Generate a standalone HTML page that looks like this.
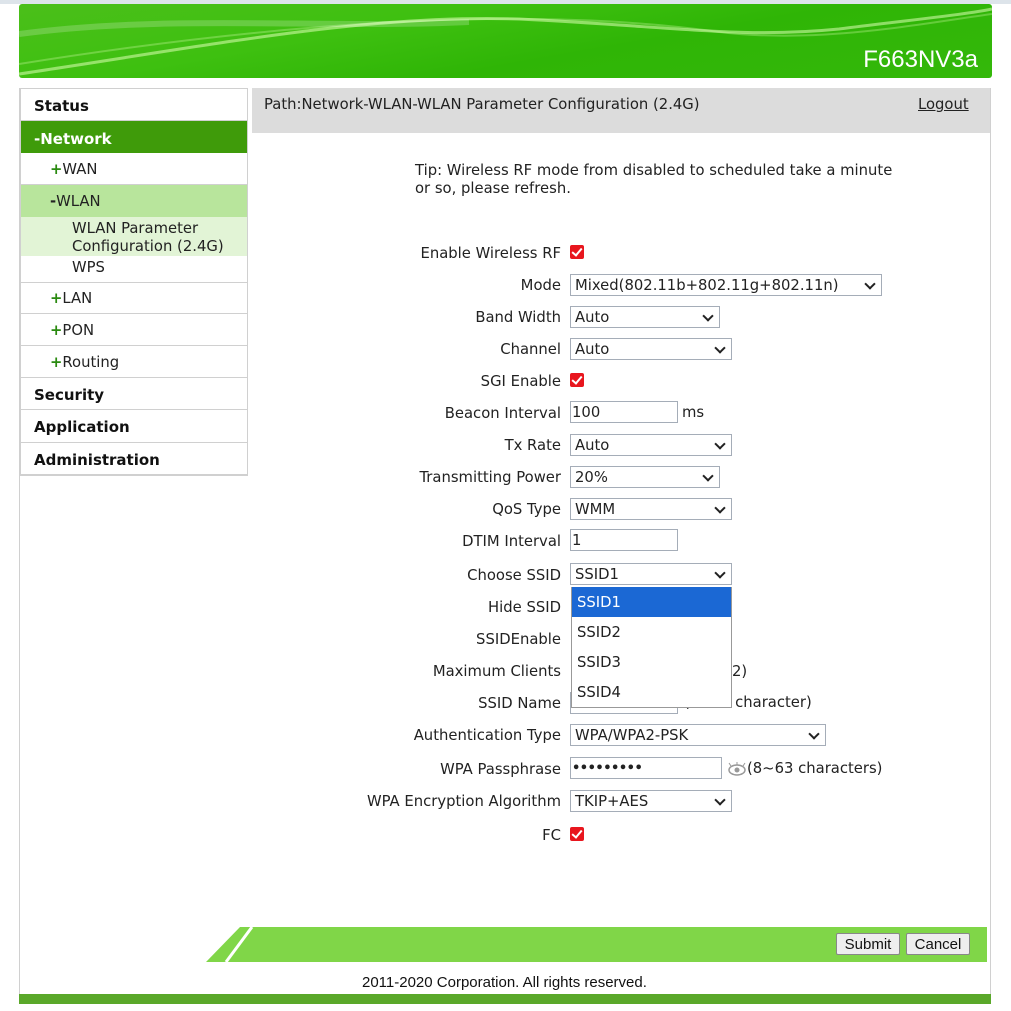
<!DOCTYPE html>
<html><head><meta charset="utf-8"><style>
body{margin:0;width:1011px;height:1011px;background:#fff;position:relative;overflow:hidden;font-family:"DejaVu Sans","Liberation Sans",sans-serif;font-size:14.8px;color:#222}
.a{position:absolute}
.lbl{position:absolute;right:450px;white-space:nowrap;line-height:18px;margin-top:1px}
.sel,.inp{position:absolute;left:570px;height:20px;border:1px solid #a5adb8;background:#fff;box-sizing:content-box;line-height:21px;padding-left:4px;white-space:nowrap}
.sel:after{content:"";position:absolute;right:7px;top:5px;width:6px;height:6px;border-right:2px solid #222;border-bottom:2px solid #222;transform:rotate(45deg)}
.inp{padding-left:1px}
.cb{position:absolute;left:570px;width:14px;height:14px;background:#e8161e;border-radius:2px}
.cb:after{content:"";position:absolute;left:4px;top:1px;width:4px;height:8px;border-right:2px solid #fff;border-bottom:2px solid #fff;transform:rotate(40deg)}
.nav{position:absolute;left:21px;width:226px;border-bottom:1px solid #d0d0d0;box-sizing:border-box}
.b{font-weight:bold;color:#111;padding-left:13px;font-size:15px}
.p{color:#2a8a10;font-weight:bold}
</style></head><body>
<div class="a" style="left:0;top:0;width:1011px;height:4px;background:#dde4ea"></div>
<div class="a" style="left:19px;top:4px;width:973px;height:74px;border-radius:3px;background:linear-gradient(170deg,#4bbf1a 0%,#3ec010 35%,#2fb506 60%,#34b80a 100%);overflow:hidden">
<svg width="973" height="74" class="a" style="left:0;top:0"><path d="M0 70 C200 40 350 10 500 15 C650 22 720 35 820 25 C900 15 950 10 973 5" stroke="rgba(220,255,180,0.55)" stroke-width="3" fill="none"/><path d="M0 60 C250 20 500 0 700 28 C800 40 900 20 973 10" stroke="rgba(220,255,180,0.3)" stroke-width="2" fill="none"/><path d="M0 30 C150 10 300 25 450 18" stroke="rgba(255,255,255,0.2)" stroke-width="6" fill="none"/></svg>
<div class="a" style="right:14px;top:42px;color:#fff;font-family:'Liberation Sans',sans-serif;font-size:24px">F663NV3a</div></div>
<div class="a" style="left:19px;top:88px;width:1px;height:916px;background:#d0d0d0"></div>
<div class="a" style="left:990px;top:88px;width:1px;height:906px;background:#d0d0d0"></div>
<div class="a" style="left:20px;top:88px;width:228px;height:388px;border:1px solid #d0d0d0;box-sizing:border-box"></div>
<div class="nav b" style="top:89px;height:32px;line-height:34px">Status</div>
<div class="nav b" style="top:121px;height:32px;line-height:36px;background:#3f9b0a;color:#fff;border:0">-Network</div>
<div class="nav" style="top:153px;height:32px;line-height:34px;padding-left:29px"><span class="p">+</span>WAN</div>
<div class="nav" style="top:185px;height:32px;line-height:34px;padding-left:29px;background:#b8e59c;border:0"><b>-</b>WLAN</div>
<div class="nav" style="top:217px;height:39px;padding-left:51px;background:#e2f4d6;border:0;line-height:18px;padding-top:3px">WLAN Parameter<br>Configuration (2.4G)</div>
<div class="nav" style="top:256px;height:27px;padding-left:51px;line-height:24px">WPS</div>
<div class="nav" style="top:283px;height:31px;line-height:32px;padding-left:29px"><span class="p">+</span>LAN</div>
<div class="nav" style="top:314px;height:32px;line-height:34px;padding-left:29px"><span class="p">+</span>PON</div>
<div class="nav" style="top:346px;height:32px;line-height:34px;padding-left:29px"><span class="p">+</span>Routing</div>
<div class="nav b" style="top:378px;height:32px;line-height:34px">Security</div>
<div class="nav b" style="top:410px;height:33px;line-height:34px">Application</div>
<div class="nav b" style="top:443px;height:32px;line-height:34px">Administration</div>
<div class="a" style="left:252px;top:88px;width:738px;height:45px;background:#dcdcdc"></div>
<div class="a" style="left:264px;top:96px">Path:Network-WLAN-WLAN Parameter Configuration (2.4G)</div>
<div class="a" style="left:918px;top:96px;text-decoration:underline">Logout</div>
<div class="a" style="left:415px;top:162px;line-height:18px">Tip: Wireless RF mode from disabled to scheduled take a minute<br>or so, please refresh.</div>

<div class="lbl" style="top:244px">Enable Wireless RF</div><div class="cb" style="top:245px"></div>
<div class="lbl" style="top:276px">Mode</div><div class="sel" style="top:274px;width:306px">Mixed(802.11b+802.11g+802.11n)</div>
<div class="lbl" style="top:308px">Band Width</div><div class="sel" style="top:306px;width:144px">Auto</div>
<div class="lbl" style="top:340px">Channel</div><div class="sel" style="top:338px;width:156px">Auto</div>
<div class="lbl" style="top:372px">SGI Enable</div><div class="cb" style="top:373px"></div>
<div class="lbl" style="top:404px">Beacon Interval</div><div class="inp" style="top:401px;width:105px">100</div><div class="a" style="left:682px;top:404px">ms</div>
<div class="lbl" style="top:436px">Tx Rate</div><div class="sel" style="top:434px;width:156px">Auto</div>
<div class="lbl" style="top:468px">Transmitting Power</div><div class="sel" style="top:466px;width:144px">20%</div>
<div class="lbl" style="top:500px">QoS Type</div><div class="sel" style="top:498px;width:156px">WMM</div>
<div class="lbl" style="top:532px">DTIM Interval</div><div class="inp" style="top:529px;width:105px">1</div>
<div class="lbl" style="top:566px">Choose SSID</div><div class="sel" style="top:563px;width:156px">SSID1</div>
<div class="lbl" style="top:598px">Hide SSID</div>
<div class="lbl" style="top:630px">SSIDEnable</div>
<div class="lbl" style="top:662px">Maximum Clients</div><div class="a" style="left:732px;top:663px">2)</div>
<div class="lbl" style="top:694px">SSID Name</div><div class="inp" style="top:692px;width:105px"></div><div class="a" style="left:684px;top:694px">(1~38 character)</div>
<div class="a" style="left:571px;top:587px;width:159px;height:120px;background:#fff;border:1px solid #999;border-top:0">
<div style="height:30px;line-height:31px;background:#1b68d4;color:#fff;padding-left:5px">SSID1</div>
<div style="height:30px;line-height:31px;padding-left:5px">SSID2</div>
<div style="height:30px;line-height:31px;padding-left:5px">SSID3</div>
<div style="height:30px;line-height:31px;padding-left:5px">SSID4</div></div>
<div class="lbl" style="top:726px">Authentication Type</div><div class="sel" style="top:724px;width:250px">WPA/WPA2-PSK</div>
<div class="lbl" style="top:760px">WPA Passphrase</div><div class="inp" style="top:757px;width:149px;font-size:13px;letter-spacing:-0.5px;font-weight:bold">•••••••••</div>
<svg class="a" style="left:727px;top:762px" width="20" height="14"><ellipse cx="10" cy="8" rx="8" ry="5" fill="none" stroke="#999" stroke-width="1.5"/><circle cx="10" cy="8" r="2.5" fill="#999"/><path d="M4 4 L2 1 M10 3 V0 M16 4 L18 1" stroke="#999"/></svg>
<div class="a" style="left:747px;top:760px">(8~63 characters)</div>
<div class="lbl" style="top:792px">WPA Encryption Algorithm</div><div class="sel" style="top:790px;width:156px">TKIP+AES</div>
<div class="lbl" style="top:826px">FC</div><div class="cb" style="top:827px"></div>

<svg class="a" style="left:206px;top:927px" width="781" height="35"><polygon points="0,35 34,0 781,0 781,35" fill="#80d648"/><line x1="20" y1="35" x2="46" y2="0" stroke="#fff" stroke-width="3"/></svg>
<div class="a" style="left:836px;top:933px;width:64px;height:22px;border:1px solid #888;background:#eee;font-family:'Liberation Sans',sans-serif;font-size:15px;text-align:center;line-height:21px;box-sizing:border-box;border-radius:2px;color:#111">Submit</div>
<div class="a" style="left:906px;top:933px;width:64px;height:22px;border:1px solid #888;background:#eee;font-family:'Liberation Sans',sans-serif;font-size:15px;text-align:center;line-height:21px;box-sizing:border-box;border-radius:2px;color:#111">Cancel</div>
<div class="a" style="left:362px;top:974px;font-family:'Liberation Sans',sans-serif;font-size:15px;color:#111">2011-2020 Corporation. All rights reserved.</div>
<div class="a" style="left:19px;top:994px;width:972px;height:10px;background:#5aa82a"></div>
</body></html>
